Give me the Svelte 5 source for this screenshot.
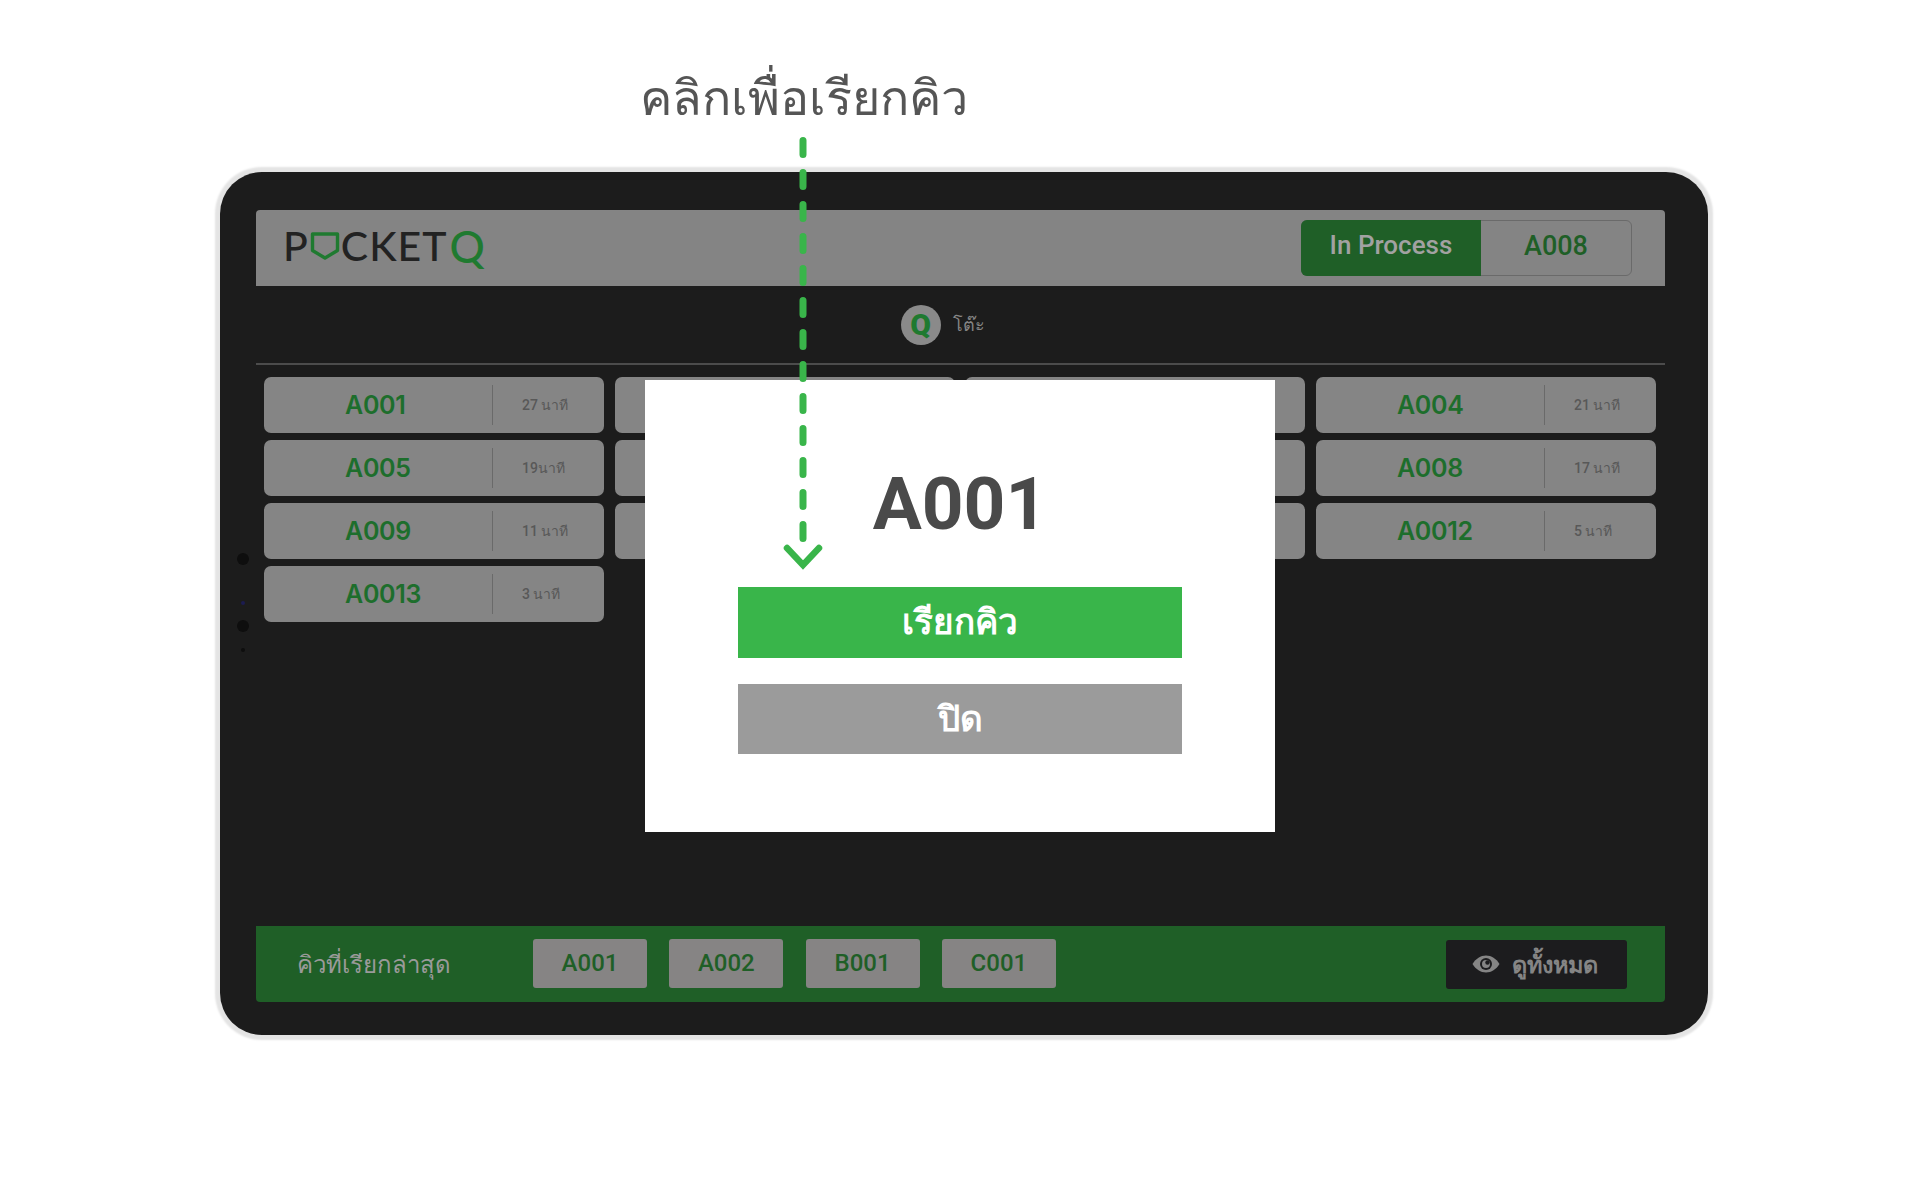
<script>
	// cards in the two middle columns sit behind the modal, only their edges show
	const columns = [
		[
			{ code: 'A001', wait: '27 นาที' },
			{ code: 'A005', wait: '19นาที' },
			{ code: 'A009', wait: '11 นาที' },
			{ code: 'A0013', wait: '3 นาที' }
		],
		[{}, {}, {}],
		[{}, {}, {}],
		[
			{ code: 'A004', wait: '21 นาที' },
			{ code: 'A008', wait: '17 นาที' },
			{ code: 'A0012', wait: '5 นาที' }
		]
	];
	const recent = ['A001', 'A002', 'B001', 'C001'];
</script>

<div class="page">
	<h1 class="hint">คลิกเพื่อเรียกคิว</h1>

	<div class="device">
		<span class="dot big" style="top: 381px"></span>
		<span class="dot tiny blue" style="top: 429px"></span>
		<span class="dot big" style="top: 448px"></span>
		<span class="dot tiny" style="top: 476px"></span>

		<header class="topbar">
			<div class="logo">
				<span>P</span>
				<svg width="30" height="30" viewBox="0 0 30 30" fill="none">
					<path d="M2.500 3H27.500V19.500L15 27L2.500 19.500Z" stroke="#1f7a30" stroke-width="3.400" stroke-linejoin="round" />
				</svg>
				<span class="logo-mid">CKET</span><span class="logo-q">Q</span>
			</div>
			<div class="status">
				<span class="status-label">In Process</span>
				<span class="status-code">A008</span>
			</div>
		</header>

		<div class="subbar">
			<span class="q-badge">Q</span>
			<span class="subbar-label">โต๊ะ</span>
		</div>

		<div class="queue">
			{#each columns as column}
				<div class="queue-col">
					{#each column as item}
						<div class="card">
							{#if item.code}
								<span class="card-code">{item.code}</span>
								<span class="card-wait">{item.wait}</span>
							{/if}
						</div>
					{/each}
				</div>
			{/each}
		</div>

		<footer class="bottombar">
			<span class="bottombar-label">คิวที่เรียกล่าสุด</span>
			<div class="chips">
				{#each recent as code}
					<span class="chip">{code}</span>
				{/each}
			</div>
			<button class="view-all">
				<svg width="28" height="18" viewBox="0 0 28 18">
					<path d="M0.5 9C4 3.5 8.500 0.500 14 0.500S24 3.500 27.500 9C24 14.500 19.500 17.500 14 17.500S4 14.500 0.500 9Z" fill="#858585" />
					<circle cx="14" cy="9" r="6" fill="#1c1c1e" />
					<circle cx="14" cy="9" r="4" fill="#858585" />
					<circle cx="15.500" cy="7.500" r="2.200" fill="#1c1c1e" />
				</svg>
				ดูทั้งหมด
			</button>
		</footer>

		<div class="modal">
			<div class="modal-code">A001</div>
			<button class="modal-btn call">เรียกคิว</button>
			<button class="modal-btn close">ปิด</button>
		</div>
	</div>

	<svg class="arrow" width="60" height="450" viewBox="0 0 60 450" fill="none">
		<path d="M30 3.500V403" stroke="#39b54a" stroke-width="7" stroke-linecap="round" stroke-dasharray="14 18" />
		<path d="M14 411L30 428L46 411" stroke="#39b54a" stroke-width="6.500" stroke-linecap="round" stroke-linejoin="miter" />
	</svg>
</div>

<style>
	:global(body) {
		background: #fff;
		font-family: Roboto, "Noto Sans", "DejaVu Sans", sans-serif;
	}
	.page {
		position: relative;
		width: 1920px;
		height: 1200px;
		padding-top: 60px;
		box-sizing: border-box;
	}
	.hint {
		margin: 0 0 0 640px;
		height: 112px;
		font-size: 48.500px;
		line-height: 78px;
		font-weight: 500;
		color: #555;
	}
	.device {
		position: relative;
		display: flex;
		flex-direction: column;
		box-sizing: border-box;
		margin-left: 220px;
		width: 1488px;
		height: 863px;
		padding: 38px 43px 33px 36px;
		background: #1c1c1c;
		border-radius: 42px;
		box-shadow: 0 0 2px 5px #e4e4e4;
	}
	.dot {
		position: absolute;
		left: 17px;
		width: 12px;
		height: 12px;
		border-radius: 50%;
		background: #0e0e0e;
	}
	.dot.tiny {
		left: 21px;
		width: 4px;
		height: 4px;
	}
	.dot.blue {
		background: #1c1c50;
	}
	.topbar {
		display: flex;
		align-items: center;
		justify-content: space-between;
		height: 76px;
		padding: 0 33px 0 27px;
		background: #848484;
		border-radius: 4px 4px 0 0;
	}
	.logo {
		display: flex;
		align-items: center;
		margin-bottom: 5px;
		font-family: Lato, sans-serif;
		font-size: 41px;
		font-weight: 500;
		color: #222;
	}
	.logo svg {
		margin: 0 0 0 2px;
	}
	.logo-mid {
		letter-spacing: 1px;
		margin-left: 1px;
	}
	.logo-q {
		margin-left: 2px;
		font-size: 44px;
		color: #1f7a30;
	}
	.status {
		display: flex;
		align-items: stretch;
		height: 56px;
		width: 331px;
		box-sizing: border-box;
		border: 1px solid #6a6a6a;
		border-radius: 6px;
		font-size: 26px;
		font-weight: 500;
		line-height: 50px;
	}
	.status-label {
		width: 180px;
		margin: -1px 0 -1px -1px;
		text-align: center;
		color: #a2a2a2;
		background: #1f5f27;
		border-radius: 6px 0 0 6px;
	}
	.status-code {
		flex: 1;
		text-align: center;
		font-size: 27px;
		color: #1f5f27;
	}
	.subbar {
		display: flex;
		align-items: center;
		justify-content: center;
		gap: 12px;
		height: 79px;
		padding-right: 36px;
		box-sizing: border-box;
		border-bottom: 2px solid #4c4c4c;
	}
	.q-badge {
		display: grid;
		place-items: center;
		width: 40px;
		height: 40px;
		border-radius: 50%;
		background: #8a8a8a;
		color: #1f7a30;
		font-size: 30px;
		font-weight: 900;
	}
	.subbar-label {
		font-size: 18px;
		font-weight: 500;
		color: #858585;
	}
	.queue {
		display: flex;
		justify-content: space-between;
		padding: 12px 9px 0 8px;
		height: 488px;
	}
	.queue-col {
		display: flex;
		flex-direction: column;
		gap: 7px;
		width: 340px;
	}
	.card {
		display: flex;
		align-items: center;
		box-sizing: border-box;
		height: 56px;
		background: #858585;
		border-radius: 7px;
	}
	.card-code {
		box-sizing: border-box;
		width: 229px;
		height: 40px;
		padding-left: 81px;
		border-right: 1px solid #6a6a6a;
		line-height: 40px;
		font-size: 25px;
		letter-spacing: -0.300px;
		font-weight: 600;
		font-family: Inter, Roboto, sans-serif;
		color: #1d6e2c;
	}
	.card-wait {
		padding-left: 29px;
		font-size: 14px;
		font-weight: 500;
		color: #585858;
	}
	.bottombar {
		display: flex;
		align-items: center;
		height: 76px;
		margin-top: auto;
		padding: 0 38px 0 41px;
		background: #1f5f27;
		border-radius: 0 0 4px 4px;
	}
	.bottombar-label {
		width: 236px;
		font-size: 24px;
		font-weight: 500;
		color: #9a9a9a;
	}
	.chips {
		display: flex;
		gap: 22.300px;
		margin-bottom: 2px;
	}
	.chip {
		width: 114px;
		height: 49px;
		line-height: 49px;
		text-align: center;
		font-size: 24px;
		font-weight: 500;
		color: #1f5f27;
		background: #868484;
		border-radius: 3px;
	}
	.view-all {
		display: flex;
		align-items: center;
		justify-content: center;
		gap: 12px;
		margin-left: auto;
		width: 181px;
		height: 49px;
		padding: 0 4px 0 0;
		border: 0;
		border-radius: 3px;
		background: #1c1c1e;
		color: #858585;
		font-family: inherit;
		font-size: 23.500px;
		font-weight: 700;
	}
	.modal {
		position: absolute;
		left: 425px;
		top: 208px;
		display: flex;
		flex-direction: column;
		align-items: center;
		box-sizing: border-box;
		width: 630px;
		height: 452px;
		background: #fff;
	}
	.modal-code {
		height: 207px;
		line-height: 248px;
		font-size: 73px;
		font-weight: 700;
		color: #4a4a4a;
	}
	.modal-btn {
		width: 444px;
		border: 0;
		padding: 0 0 2px;
		color: #fff;
		font-family: inherit;
		font-size: 35px;
		font-weight: 700;
	}
	.call {
		height: 71px;
		background: #39b54a;
	}
	.close {
		height: 70px;
		margin-top: 26px;
		background: #9b9b9b;
	}
	.arrow {
		position: absolute;
		left: 773px;
		top: 137px;
	}
</style>
